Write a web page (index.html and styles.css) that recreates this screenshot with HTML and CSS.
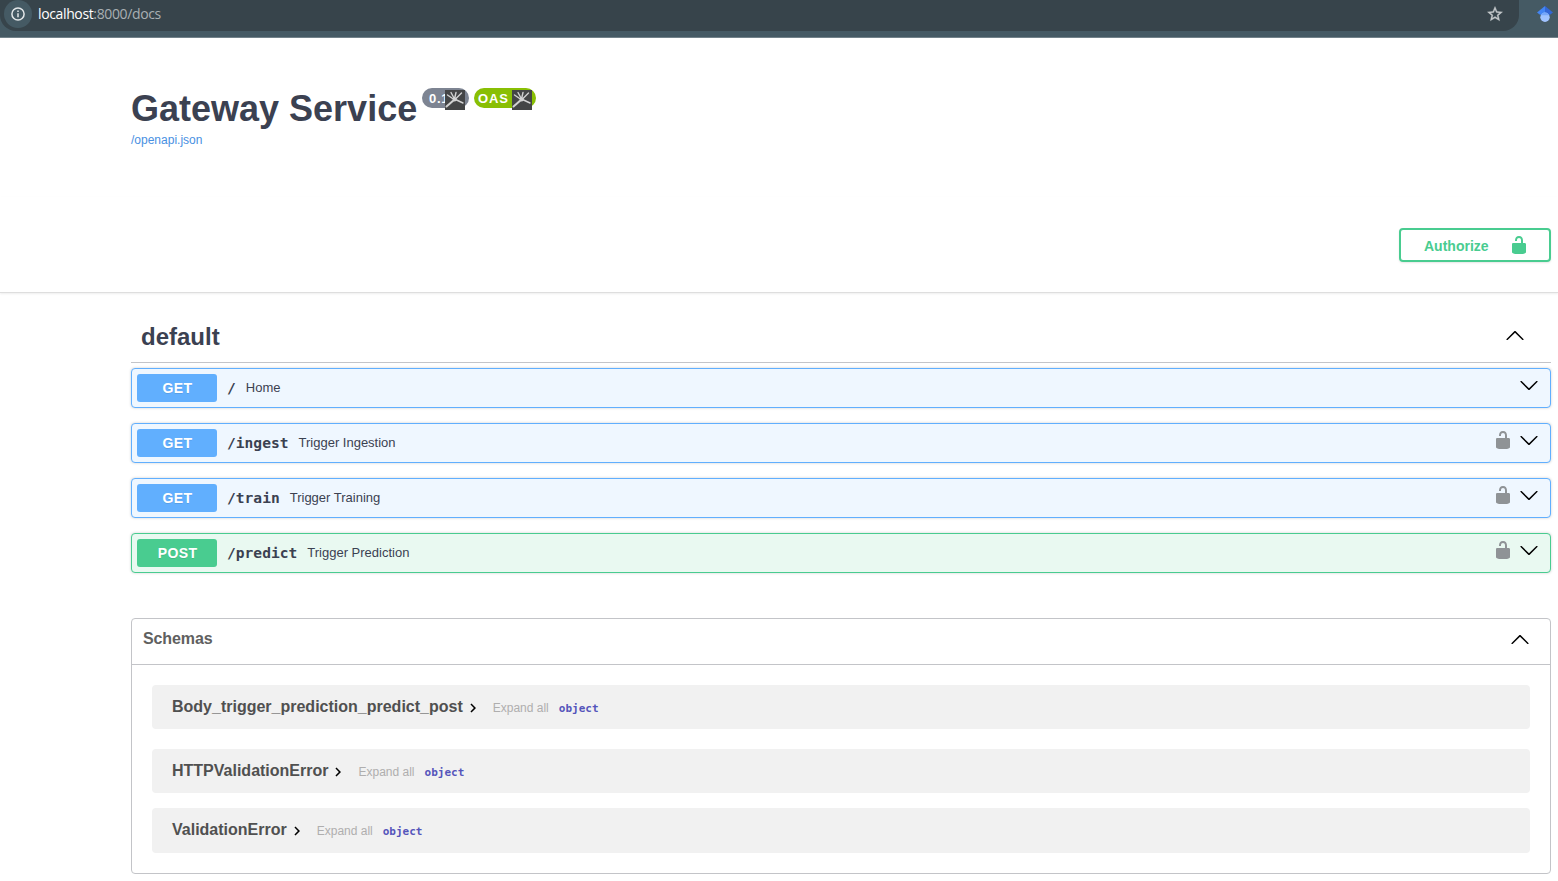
FILE: index.html
```html
<!DOCTYPE html>
<html lang="en">
<head>
<meta charset="utf-8">
<title>Gateway Service - Swagger UI</title>
<link rel="stylesheet" href="styles.css">
</head>
<body>
<svg class="defs" width="0" height="0">
  <symbol id="unlocked" viewBox="0 0 20 20"><path d="M15.8 8H14V5.6C14 2.703 12.665 1 10 1 7.334 1 6 2.703 6 5.6V6h2v-.801C8 3.754 8.797 3 10 3c1.203 0 2 .754 2 2.199V8H4c-.553 0-1 .646-1 1.199V17c0 .549.428 1.139.951 1.307l1.197.387C5.672 18.861 6.55 19 7.1 19h5.8c.549 0 1.428-.139 1.951-.307l1.196-.387c.524-.167.953-.757.953-1.306V9.199C17 8.646 16.352 8 15.8 8z"/></symbol>
  <symbol id="up" viewBox="0 0 20 20"><path d="M17.418 14.908c.272.281.701.281.979 0s.271-.709 0-.969l-7.908-7.83c-.27-.268-.707-.268-.979 0l-7.908 7.83c-.27.268-.271.701 0 .969.271.268.709.268.979 0L10 7.767l7.418 7.141z"/></symbol>
  <symbol id="down" viewBox="0 0 20 20"><path d="M17.418 6.109c.272-.268.709-.268.979 0s.271.701 0 .969l-7.908 7.83c-.27.268-.707.268-.979 0l-7.908-7.83c-.27-.268-.271-.701 0-.969s.709-.268.979 0L10 13.25l7.418-7.141z"/></symbol>
  <symbol id="right" viewBox="0 0 24 24"><path d="M10 6L8.59 7.41 13.17 12l-4.58 4.59L10 18l6-6z"/></symbol>
  <symbol id="burst" viewBox="0 0 20 20"><rect width="20" height="20" fill="#444546"/><g fill="none" stroke="#d2d2d2" stroke-linecap="round"><path d="M10 9.500L16.500 3M9.500 9L11 2.500M9.500 9L6 2.500M9 9.500L2.500 5M10.500 9.500L18 13" stroke-width="1.400"/><path d="M9.500 9.500L1.500 16.500" stroke-width="2"/></g><circle cx="9.700" cy="9.400" r="2" fill="#d2d2d2"/></symbol>
</svg>
<header class="bar">
  <div class="address">
    <span class="site-info"><svg width="16" height="16" viewBox="0 0 16 16" fill="none" stroke="#e3e7e9" stroke-width="1.500"><circle cx="8" cy="8" r="6.100"/><path d="M8 7.200v4M8 4.500v1.400"/></svg></span>
    <span class="url"><b>localhost</b>:8000/docs</span>
    <svg class="star" width="18" height="18" viewBox="0 0 24 24" fill="#c5c9cb" stroke="#c5c9cb" stroke-width=".5"><path d="M22 9.240l-7.190-.62L12 2 9.190 8.630 2 9.240l5.460 4.730L5.820 21 12 17.270 18.180 21l-1.630-7.030L22 9.240zM12 15.400l-3.760 2.270 1-4.280-3.320-2.880 4.380-.38L12 6.100l1.710 4.040 4.380.38-3.320 2.880 1 4.280L12 15.400z"/></svg>
  </div>
  <svg class="scholar" width="16" height="17" viewBox="0 0 16 17"><path d="M8 0L0 6.500l3 2.300h5z" fill="#4285f4"/><path d="M8 0l8 6.500-3 2.300H8z" fill="#3367d6"/><circle cx="8" cy="11.300" r="4.700" fill="#a0c3ff"/><path d="M3.700 9.200a4.800 4.800 0 0 1 8.600 0z" fill="#76a7fa"/></svg>
</header>
<section class="info">
  <div class="title-row">
    <h1>Gateway Service</h1>
    <span class="badge version">0.1.0<svg class="burst" width="20" height="20"><use href="#burst"/></svg></span>
    <span class="badge oas">OAS<svg class="burst" width="20" height="20"><use href="#burst"/></svg></span>
  </div>
  <a class="spec-link">/openapi.json</a>
</section>
<section class="scheme">
  <button class="authorize"><span>Authorize</span><svg width="20" height="20"><use href="#unlocked"/></svg></button>
</section>
<main>
  <h2 class="tag"><span>default</span><svg width="20" height="20"><use href="#up"/></svg></h2>
  <div class="op get"><span class="method">GET</span><code>/</code><span class="summary">Home</span><svg class="arrow" width="20" height="20"><use href="#down"/></svg></div>
  <div class="op get"><span class="method">GET</span><code>/ingest</code><span class="summary">Trigger Ingestion</span><svg class="lock" width="20" height="20"><use href="#unlocked"/></svg><svg class="arrow" width="20" height="20"><use href="#down"/></svg></div>
  <div class="op get"><span class="method">GET</span><code>/train</code><span class="summary">Trigger Training</span><svg class="lock" width="20" height="20"><use href="#unlocked"/></svg><svg class="arrow" width="20" height="20"><use href="#down"/></svg></div>
  <div class="op post"><span class="method">POST</span><code>/predict</code><span class="summary">Trigger Prediction</span><svg class="lock" width="20" height="20"><use href="#unlocked"/></svg><svg class="arrow" width="20" height="20"><use href="#down"/></svg></div>
  <section class="schemas">
    <h3><span>Schemas</span><svg width="20" height="20"><use href="#up"/></svg></h3>
    <div class="models">
      <div class="model"><strong>Body_trigger_prediction_predict_post</strong><svg width="18" height="18"><use href="#right"/></svg><span class="expand">Expand all</span><span class="type">object</span></div>
      <div class="model"><strong>HTTPValidationError</strong><svg width="18" height="18"><use href="#right"/></svg><span class="expand">Expand all</span><span class="type">object</span></div>
      <div class="model last"><strong>ValidationError</strong><svg width="18" height="18"><use href="#right"/></svg><span class="expand">Expand all</span><span class="type">object</span></div>
    </div>
  </section>
</main>
</body>
</html>
```

FILE: styles.css
```css
* { box-sizing: border-box; }
body { margin: 0; height: 881px; overflow: hidden; background: #fff; color: #3b4151; font-family: "Liberation Sans", Arial, sans-serif; }
h1, h2, h3 { margin: 0; }
svg { flex: none; }
.defs { position: absolute; }

.bar { display: flex; height: 38px; background: #455a64; border-bottom: 1px solid #72828a; }
.address { display: flex; align-items: center; width: 1519px; height: 31px; padding: 0 15px 3px 3px; background: #37444b; border-radius: 0 0 16px 16px; }
.site-info { display: flex; align-items: center; justify-content: center; width: 28px; height: 28px; border-radius: 50%; background: #455a64; margin-left: 1px; }
.url { margin-left: 6px; font: 14px/20px "Open Sans", sans-serif; letter-spacing: -.37px; color: #a9b0b3; }
.url b { font-weight: 400; color: #fff; }
.star { margin-left: auto; }
.scholar { margin: 6px 0 0 18px; }

.info { height: 159px; padding: 48px 0 0 131px; }
.title-row { display: flex; align-items: flex-start; height: 47px; }
h1 { width: 291px; font-size: 36px; line-height: 45px; white-space: nowrap; }
.badge { position: relative; display: block; height: 20px; margin-top: 2px; padding-left: 8px; border-radius: 10px; color: #fff; font-size: 13px; font-weight: 700; line-height: 21px; letter-spacing: .3px; white-space: nowrap; }
.version { width: 47px; background: #7d8492; margin-right: 5px; padding-left: 7px; letter-spacing: .7px; }
.oas { width: 62px; background: #89bf04; padding-left: 4px; letter-spacing: .9px; }
.burst { position: absolute; top: 2px; right: 4px; }
.spec-link { display: block; font-size: 12px; line-height: 14px; color: #4990e2; }

.scheme { display: flex; justify-content: flex-end; height: 96px; padding: 31px 7px 0 0; border-bottom: 1px solid #dedede; box-shadow: 0 1px 2px rgba(0,0,0,.07); }
.authorize { display: flex; align-items: center; justify-content: space-between; width: 152px; height: 34px; padding: 0 20px 0 23px; border: 2px solid #49cc90; border-radius: 4px; background: transparent; box-shadow: 0 1px 2px rgba(0,0,0,.1); color: #49cc90; fill: #49cc90; font: 700 14px/20px "Liberation Sans", Arial, sans-serif; }
.authorize span { margin-top: 2px; }

main { padding: 25px 7px 0 131px; }
.tag { display: flex; justify-content: space-between; height: 45px; margin-bottom: 5px; padding: 4px 26px 0 10px; border-bottom: 1px solid #c3c4c8; font-size: 24px; line-height: 30px; }
.tag svg { margin-top: 3px; }
.op { display: flex; align-items: center; height: 40px; margin-bottom: 15px; padding: 0 11px 0 5px; border: 1px solid; border-radius: 4px; box-shadow: 0 0 3px rgba(0,0,0,.19); }
.get { border-color: #61affe; background: #eff7ff; }
.post { border-color: #49cc90; background: #e9f9f1; }
.method { width: 80px; height: 28px; border-radius: 3px; color: #fff; font-size: 14px; font-weight: 700; line-height: 28px; letter-spacing: .4px; padding-left: 1px; text-align: center; text-shadow: 0 1px 0 rgba(0,0,0,.1); }
.get .method { background: #61affe; }
.post .method { background: #49cc90; }
code { margin: -1px 10px 0; font: 700 14.6px/20px "DejaVu Sans Mono", monospace; }
.summary { font-size: 13px; line-height: 16px; margin-top: -1px; }
.arrow { margin: -6px 0 0 auto; }
.lock { margin: -6px 6px 0 auto; fill: #8f9396; }
.lock + .arrow { margin-left: 0; }

.schemas { height: 256px; margin-top: 45px; border: 1px solid #c3c4c8; border-radius: 4px; }
h3 { display: flex; justify-content: space-between; height: 46px; padding: 10px 20px 0 11px; border-bottom: 1px solid #c3c4c8; color: #606060; font-size: 16px; line-height: 20px; letter-spacing: -.1px; }
h3 svg { fill: #000; }
.models { padding: 20px; }
.model { display: flex; align-items: center; height: 44px; margin-bottom: 20px; padding-left: 20px; border-radius: 4px; background: #f1f1f1; }
.model:nth-child(2) { margin-bottom: 15px; }
.model.last { height: 45px; margin: 0; }
.model strong { color: #505050; font-size: 16px; line-height: 20px; margin-top: -1px; }
.model svg { margin: 1px 11px 0 1px; }
.expand { color: #afaeae; font-size: 12px; line-height: 16px; margin-top: 1px; }
.type { margin: 3px 0 0 10px; color: #5555bb; font: 700 11px/16px "DejaVu Sans Mono", monospace; }
.last .type { margin-top: 2px; }
```
